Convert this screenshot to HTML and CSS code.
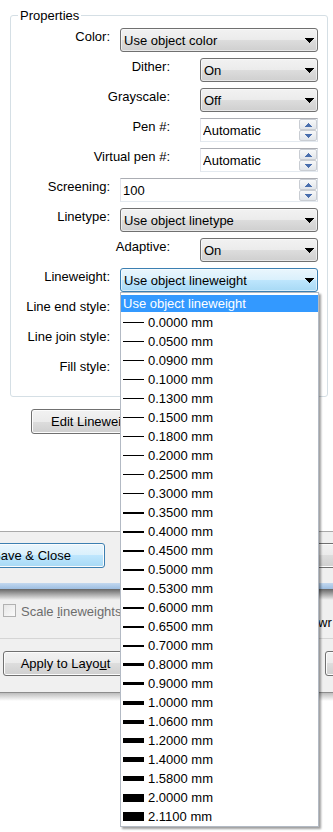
FILE: index.html
```html
<!DOCTYPE html>
<html>
<head>
<meta charset="utf-8">
<title>Plot Style Table Editor</title>
<link rel="stylesheet" href="styles.css">
</head>
<body>
<div class="page">
  <section class="sheet">
    <fieldset class="group">
      <legend>Properties</legend>
      <div class="rows">
        <div class="row">
          <span class="lbl">Color:</span>
          <div class="combo"><span class="txt">Use object color</span><svg class="arrow" viewBox="0 0 9 5"><path d="M0 0h9v1h-1v1h-1v1h-1v1h-1v1h-1v-1h-1v-1h-1v-1h-1v-1h-1z"/></svg></div>
        </div>
        <div class="row narrow">
          <span class="lbl">Dither:</span>
          <div class="combo"><span class="txt">On</span><svg class="arrow" viewBox="0 0 9 5"><path d="M0 0h9v1h-1v1h-1v1h-1v1h-1v1h-1v-1h-1v-1h-1v-1h-1v-1h-1z"/></svg></div>
        </div>
        <div class="row narrow">
          <span class="lbl">Grayscale:</span>
          <div class="combo"><span class="txt">Off</span><svg class="arrow" viewBox="0 0 9 5"><path d="M0 0h9v1h-1v1h-1v1h-1v1h-1v1h-1v-1h-1v-1h-1v-1h-1v-1h-1z"/></svg></div>
        </div>
        <div class="row narrow">
          <span class="lbl">Pen #:</span>
          <div class="spin"><span class="txt">Automatic</span><div class="spinbtns"><i><svg class="tri" viewBox="0 0 7 4"><path d="M3 0h1v1h1v1h1v1h1v1h-7v-1h1v-1h1v-1h1z"/></svg></i><i><svg class="tri" viewBox="0 0 7 4"><path d="M0 0h7v1h-1v1h-1v1h-1v1h-1v-1h-1v-1h-1v-1h-1z"/></svg></i></div></div>
        </div>
        <div class="row narrow">
          <span class="lbl">Virtual pen #:</span>
          <div class="spin"><span class="txt">Automatic</span><div class="spinbtns"><i><svg class="tri" viewBox="0 0 7 4"><path d="M3 0h1v1h1v1h1v1h1v1h-7v-1h1v-1h1v-1h1z"/></svg></i><i><svg class="tri" viewBox="0 0 7 4"><path d="M0 0h7v1h-1v1h-1v1h-1v1h-1v-1h-1v-1h-1v-1h-1z"/></svg></i></div></div>
        </div>
        <div class="row">
          <span class="lbl">Screening:</span>
          <div class="spin"><span class="txt">100</span><div class="spinbtns"><i><svg class="tri" viewBox="0 0 7 4"><path d="M3 0h1v1h1v1h1v1h1v1h-7v-1h1v-1h1v-1h1z"/></svg></i><i><svg class="tri" viewBox="0 0 7 4"><path d="M0 0h7v1h-1v1h-1v1h-1v1h-1v-1h-1v-1h-1v-1h-1z"/></svg></i></div></div>
        </div>
        <div class="row">
          <span class="lbl">Linetype:</span>
          <div class="combo"><span class="txt">Use object linetype</span><svg class="arrow" viewBox="0 0 9 5"><path d="M0 0h9v1h-1v1h-1v1h-1v1h-1v1h-1v-1h-1v-1h-1v-1h-1v-1h-1z"/></svg></div>
        </div>
        <div class="row narrow">
          <span class="lbl">Adaptive:</span>
          <div class="combo"><span class="txt">On</span><svg class="arrow" viewBox="0 0 9 5"><path d="M0 0h9v1h-1v1h-1v1h-1v1h-1v1h-1v-1h-1v-1h-1v-1h-1v-1h-1z"/></svg></div>
        </div>
        <div class="row">
          <span class="lbl">Lineweight:</span>
          <div class="combo hot"><span class="txt">Use object lineweight</span><svg class="arrow" viewBox="0 0 9 5"><path d="M0 0h9v1h-1v1h-1v1h-1v1h-1v1h-1v-1h-1v-1h-1v-1h-1v-1h-1z"/></svg>
            <div class="droplist">
              <div class="opt sel">Use object lineweight</div>
              <div class="opt"><span class="lw w1"></span>0.0000 mm</div>
              <div class="opt"><span class="lw w1"></span>0.0500 mm</div>
              <div class="opt"><span class="lw w1"></span>0.0900 mm</div>
              <div class="opt"><span class="lw w1"></span>0.1000 mm</div>
              <div class="opt"><span class="lw w1"></span>0.1300 mm</div>
              <div class="opt"><span class="lw w1"></span>0.1500 mm</div>
              <div class="opt"><span class="lw w1"></span>0.1800 mm</div>
              <div class="opt"><span class="lw w1"></span>0.2000 mm</div>
              <div class="opt"><span class="lw w1"></span>0.2500 mm</div>
              <div class="opt"><span class="lw w1"></span>0.3000 mm</div>
              <div class="opt"><span class="lw w2"></span>0.3500 mm</div>
              <div class="opt"><span class="lw w2"></span>0.4000 mm</div>
              <div class="opt"><span class="lw w2"></span>0.4500 mm</div>
              <div class="opt"><span class="lw w2"></span>0.5000 mm</div>
              <div class="opt"><span class="lw w2"></span>0.5300 mm</div>
              <div class="opt"><span class="lw w2"></span>0.6000 mm</div>
              <div class="opt"><span class="lw w2"></span>0.6500 mm</div>
              <div class="opt"><span class="lw w2"></span>0.7000 mm</div>
              <div class="opt"><span class="lw w3"></span>0.8000 mm</div>
              <div class="opt"><span class="lw w3"></span>0.9000 mm</div>
              <div class="opt"><span class="lw w4"></span>1.0000 mm</div>
              <div class="opt"><span class="lw w4"></span>1.0600 mm</div>
              <div class="opt"><span class="lw w5"></span>1.2000 mm</div>
              <div class="opt"><span class="lw w5"></span>1.4000 mm</div>
              <div class="opt"><span class="lw w5"></span>1.5800 mm</div>
              <div class="opt"><span class="lw w8"></span>2.0000 mm</div>
              <div class="opt"><span class="lw w9"></span>2.1100 mm</div>
            </div>
          </div>
        </div>
        <div class="row">
          <span class="lbl">Line end style:</span>
          <div class="combo"></div>
        </div>
        <div class="row">
          <span class="lbl">Line join style:</span>
          <div class="combo"></div>
        </div>
        <div class="row">
          <span class="lbl">Fill style:</span>
          <div class="combo"></div>
        </div>
      </div>
    </fieldset>
    <div class="editrow"><button class="btn edit">Edit Lineweights...</button></div>
  </section>

  <div class="foot1">
    <button class="btn def save">Save &amp; Close</button>
    <button class="btn cancel"></button>
  </div>
  <div class="frame"></div>
  <div class="shade"></div>
  <div class="foot2">
    <span class="chk"></span><span class="dis">Scale <u>l</u>ineweights</span>
    <span class="wr">wr</span>
  </div>
  <div class="foot3">
    <button class="btn apply">Apply to Layo<u>u</u>t</button>
    <button class="btn other"></button>
  </div>
  <div class="shade2"></div>
</div>
</body>
</html>
```

FILE: styles.css
```css
* { box-sizing: border-box; }
html, body { margin: 0; padding: 0; }
body {
  background: #fff;
  font-family: "Liberation Sans", Arial, sans-serif;
  font-size: 13px;
  line-height: 15px;
  color: #000;
}
.page { width: 333px; height: 832px; overflow: hidden; }

.sheet {
  height: 532px;
  padding-top: 8px;
  background: #fff;
  border-bottom: 1px solid #a9a9a9;
}
.group {
  margin: 0 5px 0 10px;
  padding: 5px 9px 14px 0;
  border: 1px solid #d5dfe5;
  border-radius: 3px;
  min-width: 0;
}
.group legend { margin-left: 7px; padding: 0 2px; line-height: 15px; }

.rows { display: grid; grid-auto-rows: 24px; row-gap: 6px; }
.row { display: grid; grid-template-columns: 99px 1fr; column-gap: 10px; }
.row.narrow { grid-template-columns: 159px 1fr; column-gap: 30px; }
.lbl { text-align: right; padding-top: 1px; white-space: nowrap; }

.combo {
  position: relative;
  display: flex;
  align-items: center;
  height: 24px;
  border: 1px solid #707070;
  border-radius: 3px;
  padding: 0 3px 0 3px;
  background: linear-gradient(#f2f2f2 0%, #ebebeb 50%, #dddddd 50%, #cfcfcf 100%);
  box-shadow: inset 0 0 0 1px rgba(255,255,255,0.55);
}
.combo.hot {
  border-color: #3c7fb1;
  background: linear-gradient(#eaf6fd 0%, #d9f0fc 50%, #bee6fd 50%, #a7d9f5 100%);
}
.txt { flex: 1; white-space: nowrap; overflow: hidden; }
.arrow { width: 9px; height: 5px; flex: none; fill: #000; }

.spin {
  display: flex;
  height: 24px;
  background: #fff;
  border: 1px solid;
  border-color: #abadb3 #dbdfe6 #e3e9ef #e2e3ea;
  padding-left: 2px;
}
.spin .txt { align-self: center; }
.spinbtns { display: flex; flex-direction: column; width: 18px; flex: none; }
.spinbtns i {
  flex: 1;
  display: flex;
  align-items: center;
  justify-content: center;
  border: 1px solid #c9cdd3;
  border-radius: 2px;
  background: linear-gradient(#f7f8f9, #e1e5ea);
}
.tri { width: 7px; height: 4px; fill: #4a6fae; }

.droplist {
  position: absolute;
  left: -1px;
  top: calc(100% + 1px);
  width: 199px;
  padding-top: 2px;
  background: #fff;
  border: 1px solid #b3bac4;
  box-shadow: 2px 2px 2px rgba(0,0,0,0.38);
  z-index: 5;
}
.opt {
  display: flex;
  align-items: center;
  height: 19px;
  padding-left: 2px;
  white-space: nowrap;
}
.opt.sel { height: 17px; margin-bottom: 1px; background: #3399ff; color: #fff; }
.lw { flex: none; width: 21px; margin-right: 4px; background: #000; }
.w1 { height: 1px; } .w2 { height: 2px; } .w3 { height: 3px; } .w4 { height: 4px; }
.w5 { height: 5px; } .w8 { height: 8px; } .w9 { height: 9px; }

.editrow { padding: 12px 0 0 31px; }

.btn {
  height: 25px;
  flex: none;
  padding: 0;
  font: inherit;
  color: #000;
  border: 1px solid #707070;
  border-radius: 3px;
  background: linear-gradient(#f2f2f2 0%, #ebebeb 50%, #dddddd 50%, #cfcfcf 100%);
  box-shadow: inset 0 0 0 1px #fcfcfc;
}
.btn.def {
  border-color: #3c7fb1;
  background: linear-gradient(#eaf6fd 0%, #d9f0fc 50%, #bee6fd 50%, #a7d9f5 100%);
}
.edit { width: 155px; text-align: left; padding-left: 19px; white-space: nowrap; }

.foot1 {
  display: flex;
  gap: 20px;
  height: 51px;
  padding-top: 11px;
  background: #f0f0f0;
}
.save { width: 147px; margin-left: -42px; white-space: nowrap; }
.cancel { width: 240px; }

.frame { height: 6px; background: linear-gradient(#c3d8ef, #9dbde0); }
.shade { height: 11px; background: linear-gradient(#666, #f0f0f0); }

.foot2 {
  display: flex;
  height: 39px;
  padding: 4px 0 0 3px;
  background: #f0f0f0;
  border-bottom: 1px solid #d5d5d5;
}
.chk {
  flex: none;
  width: 13px;
  height: 13px;
  margin-right: 5px;
  border: 1px solid #b1b1b1;
  background: linear-gradient(135deg, #e6e6e6, #fbfbfb);
}
.dis { color: #6d6d6d; white-space: nowrap; }
.wr { margin-left: auto; width: 15px; flex: none; overflow: hidden; white-space: nowrap; padding-top: 11px; }

.foot3 {
  display: flex;
  height: 54px;
  padding: 12px 0 0 3px;
  background: #f0f0f0;
  border-bottom: 1px solid #8c8c8c;
}
.apply { width: 125px; white-space: nowrap; }
.other { width: 40px; margin-left: auto; margin-right: -32px; }
.shade2 { height: 8px; background: linear-gradient(#bdbdbd, #fff); }
```
